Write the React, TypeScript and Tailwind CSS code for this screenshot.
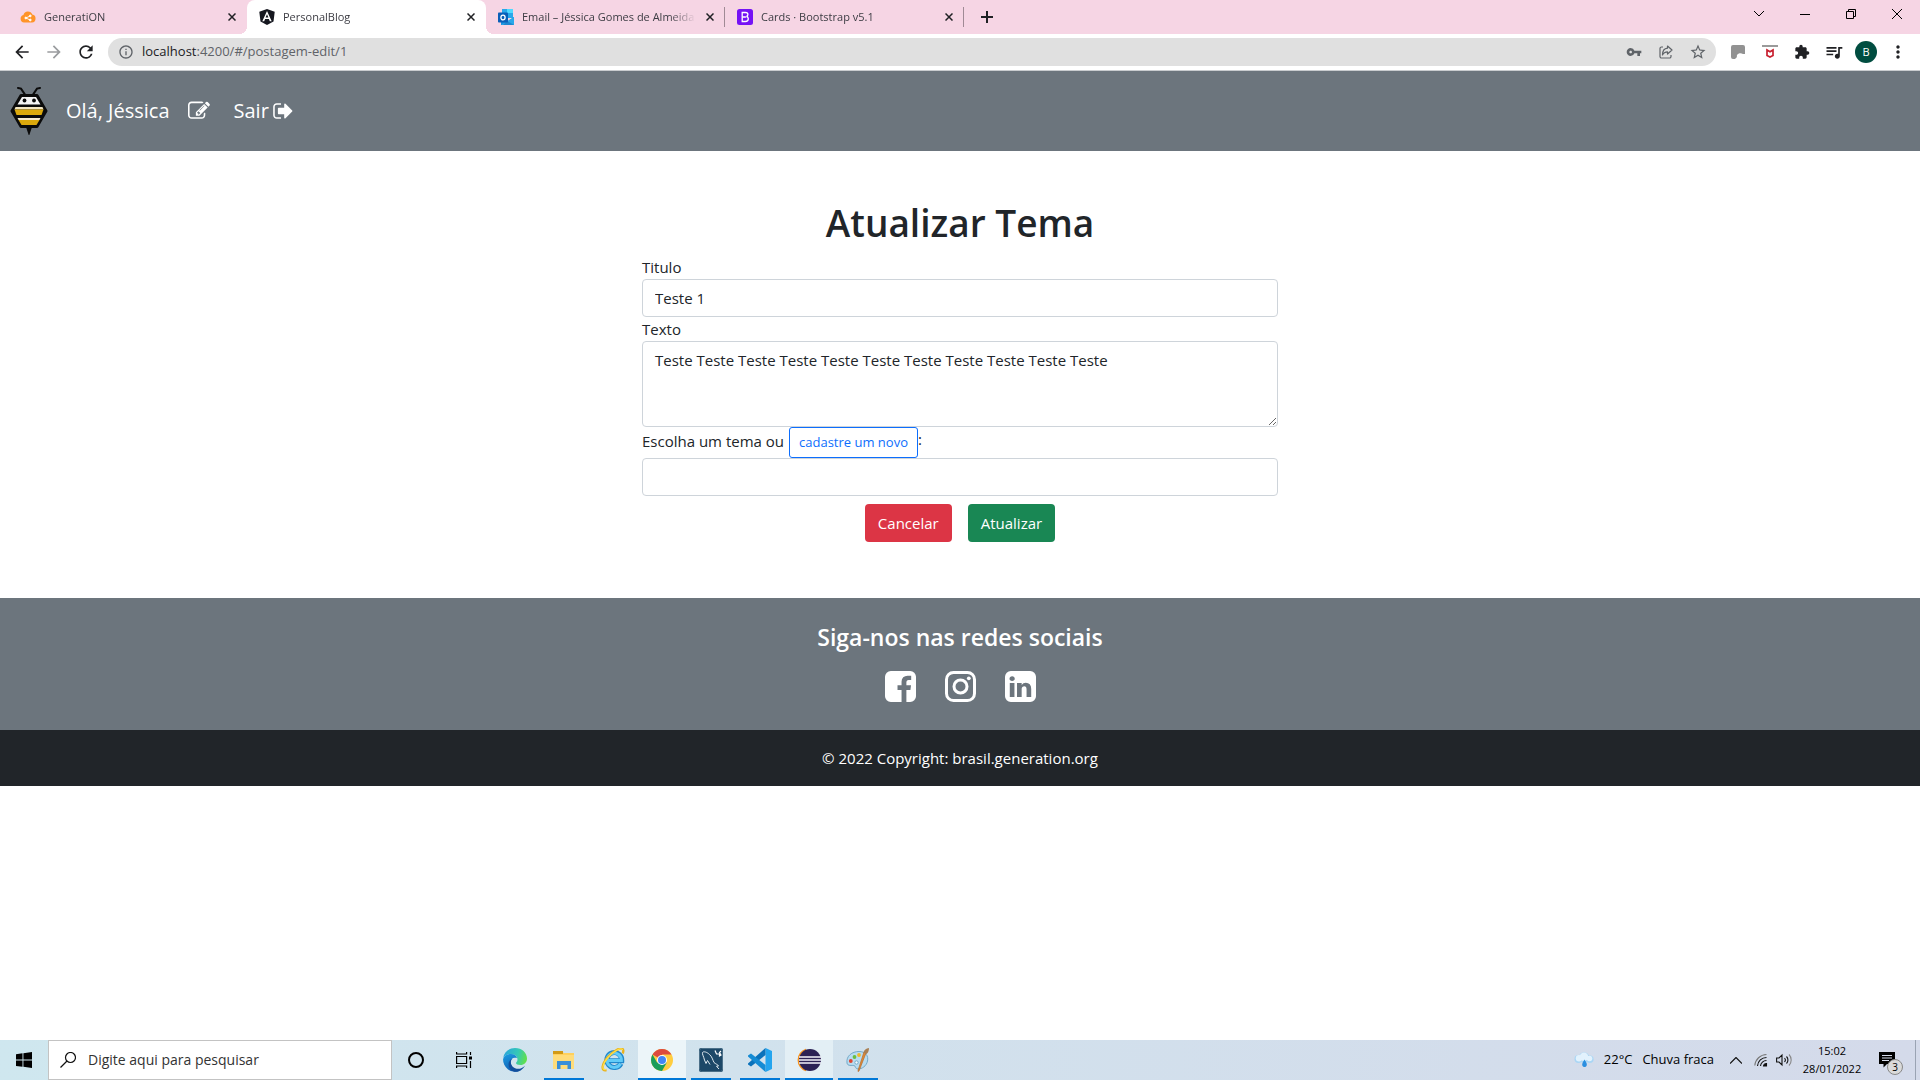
import React, { useState } from "react";
import { MdExtension, MdOutlineStarBorder, MdVpnKey, MdQueueMusic, MdArrowBack, MdArrowForward, MdRefresh, MdInfoOutline, MdMoreVert } from "react-icons/md";

type IconProps = { className?: string };

const CloudIcon = () => (
  <svg viewBox="0 0 16 16" className="size-4 shrink-0" aria-hidden="true">
    <path d="M4 13.500a3.900 3.900 0 0 1-.6-7.600A4.700 4.700 0 0 1 12.300 5.600 4 4 0 0 1 12 13.500z" fill="#ff9429" />
    <g stroke="#fff" strokeWidth="0.900" fill="#fff">
      <path d="M6 9l4-2M6 9l4 2" fill="none" />
      <circle cx="5.800" cy="9" r="0.900" />
      <circle cx="10.300" cy="6.900" r="0.900" />
      <circle cx="10.300" cy="11" r="0.900" />
    </g>
  </svg>
);

const AngularIcon = () => (
  <svg viewBox="0 0 16 16" className="size-4 shrink-0" aria-hidden="true">
    <path d="M8 0l7.700 2.700-1.200 9.800L8 16l-6.500-3.500L.3 2.700z" fill="#15171f" />
    <path d="M8 2L3.300 12.300h1.900l.9-2.300h3.800l.9 2.300h1.900zm0 3.200l1.400 3.300H6.600z" fill="#fff" />
  </svg>
);

const OutlookIcon = () => (
  <svg viewBox="0 0 16 16" className="size-4 shrink-0" aria-hidden="true">
    <path d="M4 0h11v9H4z" fill="#28a8ea" />
    <path d="M9 0h6v4H9z" fill="#50d9ff" />
    <path d="M4 4h5v5H4z" fill="#0364b8" />
    <path d="M3 8l7 4 6-4v8H3z" fill="#1490df" />
    <path d="M3 16l13-8v8z" fill="#28a8ea" />
    <path d="M9 12l7 4H5z" fill="#1066b5" opacity="0.500" />
    <rect y="3.500" width="10" height="10" rx="0.800" fill="#0a5fb8" />
    <ellipse cx="5" cy="8.500" rx="2.100" ry="2.400" fill="none" stroke="#fff" strokeWidth="1.300" />
  </svg>
);

const BootstrapIcon = () => (
  <svg viewBox="0 0 16 16" className="size-4 shrink-0" aria-hidden="true">
    <rect width="16" height="16" rx="2.500" fill="#7512f5" />
    <path d="M5.200 3.500h3.300c1.500 0 2.400.8 2.400 2.100 0 1-.6 1.700-1.500 1.900 1.200.2 1.900 1 1.900 2.200 0 1.700-1.100 2.800-2.900 2.800H5.200zM5.900 8h3" fill="none" stroke="#fff" strokeWidth="1.300" />
  </svg>
);

const CloseIcon = ({ className }: IconProps) => (
  <svg viewBox="0 0 8 8" className={className} aria-hidden="true">
    <path d="M.5.5l7 7M7.500.5l-7 7" stroke="currentColor" strokeWidth="1.500" />
  </svg>
);

const BeeLogo = () => (
  <svg viewBox="0 0 38 48" className="h-12 w-[38px]" aria-hidden="true">
    <path d="M8 1l3 .6 4 6M30 1l-3 .6-4 6" fill="none" stroke="#0b0b0b" strokeWidth="2" strokeLinecap="round" />
    <path d="M11 8.500h16L36 24l-9 15.500H11L2 24z" fill="#0b0b0b" stroke="#0b0b0b" strokeWidth="3" strokeLinejoin="round" />
    <path d="M19 49l-3-9h6z" fill="#0b0b0b" />
    <path d="M12 10h14l4.500 7.500H7.500z" fill="#f4f4f4" />
    <circle cx="14.500" cy="13.500" r="1.900" fill="#0b0b0b" />
    <circle cx="24" cy="13.500" r="1.900" fill="#0b0b0b" />
    <path d="M5.500 20h27l1 2.500h-29z" fill="#f3e7c4" />
    <path d="M4.500 22.500h29l-2 5.500H6.500z" fill="#dca90c" />
    <path d="M7.500 31h23l-1 2h-21z" fill="#f8ecd0" />
    <path d="M8.500 33h21l-3 5h-15z" fill="#dca90c" />
  </svg>
);

const EditIcon = () => (
  <svg viewBox="0 0 1792 1792" className="size-[22px]" fill="currentColor" aria-hidden="true">
    <path d="M888 1184l116-116-152-152-116 116v56h96v96h56zm440-720q-16-16-33 1l-350 350q-17 17-1 33t33-1l350-350q17-17 1-33zm80 594v190q0 119-84.500 203.500t-203.500 84.500h-832q-119 0-203.500-84.500t-84.500-203.500v-832q0-119 84.500-203.500t203.500-84.500h832q63 0 117 25 15 7 18 23 3 17-9 29l-49 49q-14 14-32 8-23-6-45-6h-832q-66 0-113 47t-47 113v832q0 66 47 113t113 47h832q66 0 113-47t47-113v-126q0-13 9-22l64-64q15-15 35-7t20 29zm-96-738l288 288-672 672h-288v-288zm444 132l-92 92-288-288 92-92q28-28 68-28t68 28l152 152q28 28 28 68t-28 68z" />
  </svg>
);

const SignOutIcon = () => (
  <svg viewBox="0 0 1600 1792" className="h-[22px] w-5" fill="currentColor" aria-hidden="true">
    <path d="M640 1440q0 4 1 20t.5 26.500-3 23.500-10 19.500-20.500 6.500h-320q-119 0-203.500-84.500t-84.500-203.500v-704q0-119 84.500-203.500t203.500-84.500h320q13 0 22.500 9.500t9.500 22.500q0 4 1 20t.5 26.500-3 23.500-10 19.500-20.500 6.500h-320q-66 0-113 47t-47 113v704q0 66 47 113t113 47h312l11.500 1 11.500 3 8 5.500 7 9 2 13.500zm928-544q0 26-19 45l-544 544q-19 19-45 19t-45-19-19-45v-288h-448q-26 0-45-19t-19-45v-384q0-26 19-45t45-19h448v-288q0-26 19-45t45-19 45 19l544 544q19 19 19 45z" />
  </svg>
);

const FacebookIcon = () => (
  <svg viewBox="0 128 1536 1536" className="size-[31px]" fill="currentColor" aria-hidden="true">
    <path d="M1248 128q119 0 203.500 84.500t84.500 203.500v960q0 119-84.500 203.500t-203.500 84.500h-188v-595h199l30-232h-229v-148q0-56 23.500-84t91.500-28l122-1v-207q-63-9-178-9-136 0-217.500 80t-81.500 226v171h-200v232h200v595h-532q-119 0-203.500-84.500t-84.500-203.500v-960q0-119 84.500-203.500t203.500-84.500h960z" />
  </svg>
);

const InstagramIcon = () => (
  <svg viewBox="0 0 31 31" className="size-[31px]" fill="none" stroke="currentColor" aria-hidden="true">
    <rect x="1.500" y="1.500" width="28" height="28" rx="7" strokeWidth="3" />
    <circle cx="15.500" cy="15.500" r="6.500" strokeWidth="3" />
    <circle cx="23.800" cy="7.300" r="1.900" fill="currentColor" stroke="none" />
  </svg>
);

const LinkedinIcon = () => (
  <svg viewBox="0 128 1536 1536" className="size-[31px]" fill="currentColor" aria-hidden="true">
    <path d="M237 1414h231v-694h-231v694zm246-908q-1-52-36-86t-93-34-94.500 34-36.500 86q0 51 35.500 85.500t92.500 34.500h1q59 0 95-34.500t36-85.500zm585 908h231v-398q0-154-73-233t-193-79q-136 0-209 117h2v-101h-231q3 66 0 694h231v-388q0-38 7-56 15-35 45-59.500t74-24.500q116 0 116 157v371zm468-998v960q0 119-84.500 203.500t-203.500 84.500h-960q-119 0-203.500-84.500t-84.500-203.500v-960q0-119 84.500-203.500t203.500-84.500h960q119 0 203.500 84.500t84.500 203.500z" />
  </svg>
);

const EdgeIcon = () => (
  <svg viewBox="0 0 24 24" className="size-6" aria-hidden="true">
    <defs>
      <linearGradient id="edgeTop" x1="0" y1="0.300" x2="1" y2="0.500">
        <stop offset="0" stopColor="#2aa5dc" />
        <stop offset="0.600" stopColor="#35c9b5" />
        <stop offset="1" stopColor="#62e04a" />
      </linearGradient>
      <linearGradient id="edgeBody" x1="0" y1="0" x2="0.400" y2="1">
        <stop offset="0" stopColor="#1b9de2" />
        <stop offset="1" stopColor="#1160b4" />
      </linearGradient>
    </defs>
    <path d="M.2 10C1 4 6 0 12 0c7 0 12 4.800 12 10.500 0 4-3 6.500-6.500 6.500-3 0-4.500-1-4.500-2 0-.7 1.500-1.300 1.500-3.500C14.500 8.500 12 6 8 6 4.500 6 1.500 7.500.2 10z" fill="url(#edgeTop)" />
    <path d="M.1 11C.8 8 4 6 8 6c3.500 0 5.500 2 6 4-5-1.500-7 2-6 6 1 4.500 5 7 8.500 6.800A12 12 0 0 1 .1 11z" fill="url(#edgeBody)" />
    <path d="M9.500 10.500c-2.500 2-2 6 0 8 3.500 3.500 9 3 12.500-.8-3.500 6-8.500 7-12 5.500-5-2-6.500-10-.5-12.700z" fill="#134f9c" />
  </svg>
);

const FolderIcon = () => (
  <svg viewBox="0 0 24 24" className="size-6" aria-hidden="true">
    <path d="M1 4h9l2 1h10v16H1z" fill="#ffd05c" />
    <path d="M1 3h10v3H1z" fill="#d29a16" />
    <path d="M1 7h21v14H1z" fill="#ffdc7a" />
    <path d="M5 21v-8h14v8h-3.500v-4h-7v4z" fill="#3a8fd8" />
  </svg>
);

const ExplorerIcon = () => (
  <svg viewBox="0 0 24 24" className="size-6" aria-hidden="true">
    <path d="M20 15.500a7.500 7.500 0 1 1 .8-2.800H7" fill="none" stroke="#2188cc" strokeWidth="5" />
    <path d="M19.600 15.500a7.200 7.200 0 1 1 .8-2.900H7" fill="none" stroke="#62cbf7" strokeWidth="3" />
    <path d="M5.500 22C-.5 23.500 1 16 6.500 9.500S20-1.500 22 1.500c.6 1 .3 2.500-.3 4" fill="none" stroke="#e9b21d" strokeWidth="2.400" />
    <path d="M5 21.500C0 22.500 1.500 16 7 9.500S20-1 21.700 2" fill="none" stroke="#fbe051" strokeWidth="1.200" />
  </svg>
);

const ChromeIcon = () => (
  <svg viewBox="0 0 22 22" className="size-[22px]" aria-hidden="true">
    <circle cx="11" cy="11" r="11" fill="#ffcd40" />
    <path d="M11 11L1.500 5.500A11 11 0 0 1 20.500 5.500H11z" fill="#dd4b3e" />
    <path d="M11 11l4.700 2.800L11 22A11 11 0 0 1 1.500 5.500l4.700 8.200z" fill="#1a9d5a" />
    <circle cx="11" cy="11" r="5" fill="#fff" />
    <circle cx="11" cy="11" r="4" fill="#4286f5" />
  </svg>
);

const WorkbenchIcon = () => (
  <svg viewBox="0 0 24 24" className="size-6" aria-hidden="true">
    <rect width="24" height="24" rx="2" fill="#1d4868" />
    <rect x="0.500" y="0.500" width="23" height="23" rx="2" fill="none" stroke="#4c7089" />
    <path d="M7 15.500L5.500 12C4.500 8 3 6 3.500 4.500 4.500 3 8 4 10.500 6.500c2.500 2 3 5 4.500 8 1.500 1.500 4 2 4.500 3.500l-2 .3 2.500 2.700M7 15.500l1.500-3 2.500 4" fill="none" stroke="#dfe9ef" />
    <path d="M16 2.500l1.500 3.500h3v2l1.500-1-1.500-2.500L22 3" stroke="#fff" strokeWidth="1.200" fill="none" />
  </svg>
);

const VsCodeIcon = () => (
  <svg viewBox="0 0 24 24" className="size-6" aria-hidden="true">
    <path d="M17.500 0L24 3v18l-6.500 3z" fill="#23a4ee" />
    <path d="M17.500 0v7L3 18.500 0 16.500v-1z" fill="#0a72bb" />
    <path d="M17.500 24v-7L3 5.500 0 7.500v1z" fill="#148bd4" />
  </svg>
);

const EclipseIcon = () => (
  <svg viewBox="0 0 24 24" className="size-6" aria-hidden="true">
    <path d="M9 1.500A11 11 0 0 0 9 22.500 12 12 0 0 1 9 1.500z" fill="#f7941e" stroke="#f7941e" strokeWidth="1.500" />
    <circle cx="13" cy="12" r="11" fill="#2c2255" />
    <path d="M2 9h22M2 12h22M2 15h22" stroke="#f4f4fa" strokeWidth="1.400" />
  </svg>
);

const PaintIcon = () => (
  <svg viewBox="0 0 24 24" className="size-6" aria-hidden="true">
    <path d="M1 15C0 8 6 3.500 13 3.500S22.500 8 21.500 13 16 21 12 21c-3 0-2-3-4-3.500S1.500 18.500 1 15z" fill="#b8dcf0" stroke="#74a9c8" />
    <circle cx="4.800" cy="13" r="1.900" fill="#e0452f" />
    <circle cx="8.500" cy="9" r="1.900" fill="#6abf40" />
    <circle cx="13" cy="7" r="1.900" fill="#f0b82c" />
    <circle cx="10.500" cy="14.500" r="1.700" fill="#f4fafd" stroke="#74a9c8" />
    <path d="M20 5l-7 18-1 .5.2-1.500L18 4z" fill="#e08a35" stroke="#b3682a" strokeWidth="0.700" />
    <path d="M17.500 4.500C18 2 20 .5 23 0c0 2-.5 4.500-2.500 6z" fill="#a97f53" />
  </svg>
);

const tabs = [
  { title: "GeneratiON", icon: <CloudIcon />, active: false, divider: false },
  { title: "PersonalBlog", icon: <AngularIcon />, active: true, divider: false },
  { title: "Email – Jéssica Gomes de Almeida", icon: <OutlookIcon />, active: false, divider: true },
  { title: "Cards · Bootstrap v5.1", icon: <BootstrapIcon />, active: false, divider: true },
];

const toolButton = "flex h-7 w-8 items-center justify-center";
const windowButton = "flex h-7 w-[46px] items-center justify-center text-black";

function TabStrip() {
  return (
    <div className="flex h-[34px] items-start bg-[#f6d5e4] pl-2 text-[11px] text-[#3c3c43]">
      <div role="tablist" className="flex h-full">
        {tabs.map((tab) => (
          <div
            key={tab.title}
            className={
              tab.active
                ? "relative flex h-full w-[239px] items-center rounded-t-lg bg-white before:absolute before:bottom-0 before:-left-2 before:size-2 before:bg-[radial-gradient(circle_at_0_0,#f6d5e4_8px,#fff_8px)] after:absolute after:-right-2 after:bottom-0 after:size-2 after:bg-[radial-gradient(circle_at_100%_0,#f6d5e4_8px,#fff_8px)]"
                : "flex h-full w-[239px] items-center"
            }
          >
            <button role="tab" aria-selected={tab.active} className="flex min-w-0 flex-1 items-center gap-2 pl-3">
              {tab.icon}
              <span className="flex-1 overflow-hidden text-left whitespace-nowrap [mask-image:linear-gradient(to_right,#000_85%,transparent)]">{tab.title}</span>
            </button>
            <button aria-label={"Fechar " + tab.title} className="flex w-7 items-center justify-center text-[#202124]">
              <CloseIcon className="size-2" />
            </button>
            <span className={tab.divider ? "h-5 w-px bg-[#a08a95]" : "h-5 w-px"} />
          </div>
        ))}
      </div>
      <button aria-label="Nova guia" className="ml-[9px] flex h-[34px] w-7 items-center justify-center">
        <svg viewBox="0 0 12 12" className="size-3">
          <path d="M6 0v12M0 6h12" stroke="#202124" strokeWidth="2" />
        </svg>
      </button>
      <div className="ml-auto flex">
        <button aria-label="Pesquisar guias" className={windowButton}>
          <svg viewBox="0 0 10 6" className="h-1.5 w-2.5"><path d="M0 0l5 5 5-5" fill="none" stroke="currentColor" /></svg>
        </button>
        <button aria-label="Minimizar" className={windowButton}>
          <span className="h-px w-2.5 bg-black" />
        </button>
        <button aria-label="Restaurar" className={windowButton}>
          <svg viewBox="0 0 10 10" className="size-2.5" fill="none" stroke="currentColor"><path d="M.5 2.500h7v7h-7zM2.500 2.500v-2h7v7h-2" /></svg>
        </button>
        <button aria-label="Fechar janela" className={windowButton}>
          <svg viewBox="0 0 10 10" className="size-2.5" stroke="currentColor"><path d="M0 0l10 10M10 0L0 10" /></svg>
        </button>
      </div>
    </div>
  );
}

function Toolbar() {
  return (
    <div className="flex h-[37px] items-center border-b border-[#c9cccf] bg-white px-1.5 text-[#202124]">
      <button aria-label="Voltar" className={toolButton}><MdArrowBack className="size-5" /></button>
      <button aria-label="Avançar" className="flex h-7 w-8 items-center justify-center text-[#9a9c9f]"><MdArrowForward className="size-5" /></button>
      <button aria-label="Recarregar" className={toolButton}><MdRefresh className="size-5" /></button>
      <div className="ml-1.5 flex h-7 flex-1 items-center rounded-full bg-[#e0e0e0] pr-0.5 pl-2.5 text-[#5f6368]">
        <MdInfoOutline className="size-4" />
        <a href="#/postagem-edit/1" className="ml-2 flex-1 text-[13px]"><span className="text-[#202124]">localhost</span>:4200/#/postagem-edit/1</a>
        <button aria-label="Senhas" className={toolButton}><MdVpnKey className="size-4" /></button>
        <button aria-label="Compartilhar" className={toolButton}>
          <svg viewBox="0 0 16 16" className="size-4" fill="none" stroke="currentColor" strokeWidth="1.200" strokeLinejoin="round">
            <path d="M5 3H3.500A1.500 1.500 0 0 0 2 4.500v8A1.500 1.500 0 0 0 3.500 14h8a1.500 1.500 0 0 0 1.500-1.500V11" />
            <path d="M9.500 2L14 6l-4.500 4V7.800C7 7.800 5.500 8.800 4.500 11c0-3.500 1.500-6.500 5-6.800z" />
          </svg>
        </button>
        <button aria-label="Favoritar" className={toolButton}><MdOutlineStarBorder className="size-[18px]" /></button>
      </div>
      <button aria-label="Extensão" className="ml-1.5 flex h-7 w-8 items-center justify-center">
        <svg viewBox="0 0 14 14" className="size-3.5"><path d="M2 0h10a2 2 0 0 1 2 2v7h-2C9 7 5 9 6 12l-2 2H2a2 2 0 0 1-2-2V2a2 2 0 0 1 2-2z" fill="#929292" /></svg>
      </button>
      <button aria-label="McAfee" className={toolButton}>
        <svg viewBox="0 0 16 14" className="h-3.5 w-4">
          <path d="M0 0h16v2H0z" fill="#9a9a9a" />
          <path d="M5 5v5.500L8 12l3-1.500V5L8 6.800z" fill="none" stroke="#c8202f" strokeWidth="1.700" />
        </svg>
      </button>
      <button aria-label="Extensões" className={toolButton}><MdExtension className="size-4" /></button>
      <button aria-label="Mídia" className={toolButton}><MdQueueMusic className="size-5" /></button>
      <button aria-label="Perfil" className={toolButton}>
        <span className="flex size-[22px] items-center justify-center rounded-full bg-[#004d40] text-[11px] text-white">B</span>
      </button>
      <button aria-label="Menu" className={toolButton}><MdMoreVert className="size-5" /></button>
    </div>
  );
}

function Navbar() {
  return (
    <nav className="flex h-20 items-center bg-[#6c757d] px-2.5 text-xl text-white">
      <a href="#/inicio" aria-label="Início"><BeeLogo /></a>
      <a href="#/perfil" className="ml-[18px] flex items-center gap-[18px]">Olá, Jéssica <EditIcon /></a>
      <a href="#/entrar" className="ml-6 flex items-center gap-1">Sair <SignOutIcon /></a>
    </nav>
  );
}

const field = "block w-full rounded border border-[#ced4da] bg-white px-3 py-1.5 text-[15px] leading-6 text-[#212529]";

function EditForm() {
  const [title, setTitle] = useState("Teste 1");
  const [text, setText] = useState("Teste Teste Teste Teste Teste Teste Teste Teste Teste Teste Teste");
  return (
    <div className="mx-auto w-full max-w-[1320px] pt-12 pb-14">
      <form className="mx-auto w-1/2 px-3 text-[15px] leading-6 text-[#212529]" onSubmit={(e) => e.preventDefault()}>
        <h1 className="mb-2 text-center text-[37px] leading-[48px] font-semibold">Atualizar Tema</h1>
        <label htmlFor="titulo" className="block">Titulo</label>
        <input id="titulo" value={title} onChange={(e) => setTitle(e.target.value)} className={field} />
        <label htmlFor="texto" className="block">Texto</label>
        <textarea id="texto" rows={3} value={text} onChange={(e) => setText(e.target.value)} className={field} />
        <div className="flex items-start">
          <label htmlFor="tema" className="pt-0.5">Escolha um tema ou</label>
          <button type="button" className="ml-[5px] rounded-[3px] border border-[#0d6efd] px-[9px] py-1 text-[13px] leading-[21px] text-[#0d6efd]">cadastre um novo</button>:
        </div>
        <select id="tema" defaultValue="" className="block h-[38px] w-full appearance-none rounded border border-[#ced4da] bg-white px-3">
          <option value=""></option>
        </select>
        <div className="mt-2 flex justify-center gap-4 text-white">
          <button type="button" className="rounded bg-[#dc3545] px-[13px] py-[7px]">Cancelar</button>
          <button type="submit" className="rounded bg-[#198754] px-[13px] py-[7px]">Atualizar</button>
        </div>
      </form>
    </div>
  );
}

function Footer() {
  return (
    <footer className="text-center text-white">
      <div className="bg-[#6c757d] pt-6 pb-7">
        <h4 className="text-[23px] leading-[30px] font-semibold">Siga-nos nas redes sociais</h4>
        <div className="mt-[19px] flex justify-center gap-[29px]">
          <a href="#facebook" aria-label="Facebook"><FacebookIcon /></a>
          <a href="#instagram" aria-label="Instagram"><InstagramIcon /></a>
          <a href="#linkedin" aria-label="LinkedIn"><LinkedinIcon /></a>
        </div>
      </div>
      <div className="bg-[#212529] p-4 text-[15px] leading-6">© 2022 Copyright: <a href="#brasil">brasil.generation.org</a></div>
    </footer>
  );
}

const apps = [
  { name: "Edge", icon: <EdgeIcon />, bar: "", tile: "" },
  { name: "Explorador de Arquivos", icon: <FolderIcon />, bar: "w-10", tile: "" },
  { name: "Internet Explorer", icon: <ExplorerIcon />, bar: "", tile: "" },
  { name: "Chrome", icon: <ChromeIcon />, bar: "w-12", tile: "bg-[#ecf5f9]" },
  { name: "MySQL Workbench", icon: <WorkbenchIcon />, bar: "w-10", tile: "" },
  { name: "Visual Studio Code", icon: <VsCodeIcon />, bar: "w-10", tile: "" },
  { name: "Eclipse", icon: <EclipseIcon />, bar: "w-12", tile: "bg-[#e3eff5]" },
  { name: "Paint", icon: <PaintIcon />, bar: "w-10", tile: "" },
];

function Taskbar() {
  return (
    <div className="flex h-10 items-center bg-linear-to-r from-[#cfe7ef] to-[#d4daea] text-black">
      <button aria-label="Iniciar" className="flex h-10 w-12 items-center justify-center">
        <svg viewBox="0 0 16 16" className="size-4"><path d="M0 2.200L6.500 1.300V7.600H0zM7.400 1.200L16 0v7.600H7.400zM0 8.500h6.500v6.300L0 13.900zM7.400 8.500H16V16l-8.600-1.200z" /></svg>
      </button>
      <label className="flex h-10 w-[344px] items-center border border-[#c3c3c3] bg-white pl-[11px]">
        <svg viewBox="0 0 16 16" className="size-4" fill="none" stroke="#111" strokeWidth="1.200"><circle cx="10.500" cy="5.500" r="5" /><path d="M7 9l-6.500 6.500" /></svg>
        <input aria-label="Pesquisar" placeholder="Digite aqui para pesquisar" className="ml-3 flex-1 text-sm outline-none placeholder:text-[#333]" />
      </label>
      <button aria-label="Cortana" className="flex h-10 w-12 items-center justify-center">
        <span className="size-4 rounded-full border-2 border-black" />
      </button>
      <button aria-label="Visão de tarefas" className="mr-[3px] flex h-10 w-12 items-center justify-center">
        <svg viewBox="0 0 16 16" className="size-4" fill="none" stroke="#000" strokeWidth="1.200">
          <path d="M.6 4.500h10v7h-10zM.6 0v2h10V0M.6 16v-2h10v2M14.500 0v3M14.500 9v7" /><path d="M13 4.500h3v3h-3z" fill="#000" stroke="none" />
        </svg>
      </button>
      <div className="flex gap-px">
        {apps.map((app) => (
          <button key={app.name} aria-label={app.name} className={"flex h-10 w-12 flex-col items-center " + app.tile}>
            <span className="flex h-[38px] items-center pt-0.5">{app.icon}</span>
            <span className={"h-0.5 bg-[#0078d7] " + app.bar} />
          </button>
        ))}
      </div>
      <div className="ml-auto flex h-10 items-center">
        <button className="flex items-center text-[13px]">
          <svg viewBox="0 0 20 16" className="h-4 w-5" aria-hidden="true">
            <g fill="#a9d6f5">
              <circle cx="4.500" cy="7" r="4" />
              <circle cx="10" cy="5.500" r="5.300" />
              <circle cx="15.800" cy="7.300" r="3.800" />
            </g>
            <g fill="#e2f2fd">
              <circle cx="5" cy="6.300" r="3.200" />
              <circle cx="10" cy="4.800" r="4.200" />
              <circle cx="15.500" cy="6.500" r="2.800" />
            </g>
            <path d="M10.500 7.500c4 5.500 2 7.500 0 7.500s-4-2 0-7.500z" fill="#2a8fe0" />
          </svg>
          <span className="ml-2.5">22°C</span>
          <span className="ml-2.5">Chuva fraca</span>
        </button>
        <button aria-label="Ícones ocultos" className="ml-4 flex w-3 justify-center">
          <svg viewBox="0 0 12 7" className="h-[7px] w-3" fill="none" stroke="#111" strokeWidth="1.200"><path d="M0 6.500l6-6 6 6" /></svg>
        </button>
        <button aria-label="Rede" className="ml-3 flex">
          <svg viewBox="0 0 14 14" className="size-3.5" fill="none" stroke="#111" strokeWidth="1.100">
            <path d="M.8 12.500A12 12 0 0 1 12.500 1.500" stroke="#777" /><path d="M3.500 13A9 9 0 0 1 12.500 4.500M6.500 13a6 6 0 0 1 6-5.500" /><path d="M9.500 13a3 3 0 0 1 3-2.500V13z" fill="#111" />
          </svg>
        </button>
        <button aria-label="Volume" className="ml-2 flex">
          <svg viewBox="0 0 16 14" className="h-3.5 w-4" fill="none" stroke="#111" strokeWidth="1.100">
            <path d="M.6 5v4h2.400L6 12V2L3 5zM8.500 5a3 3 0 0 1 0 4M10.500 3.500a5 5 0 0 1 0 7" /><path d="M13 1.500a8 8 0 0 1 0 11" stroke="#888" />
          </svg>
        </button>
        <button className="ml-2.5 w-[60px] text-center text-[11px] leading-[18px] whitespace-nowrap"><span className="block">15:02</span><span className="block">28/01/2022</span></button>
        <button aria-label="Notificações" className="relative ml-[17px] flex">
          <svg viewBox="0 0 16 16" className="size-4"><path d="M0 0h16v12H8l-3.500 3.500V12H0z" /><path d="M3 3.500h10M3 6h10M3 8.500h7" stroke="#d4daea" /></svg>
          <span className="absolute top-[7px] left-2 flex size-4 items-center justify-center rounded-full border border-[#888] bg-[#dadada] text-[10px]">3</span>
        </button>
        <span className="ml-5 h-10 w-px bg-[#9aa3b3]" />
        <button aria-label="Mostrar área de trabalho" className="h-10 w-1" />
      </div>
    </div>
  );
}

export default function App() {
  return (
    <div className="flex min-h-screen flex-col bg-white font-['Open_Sans','Noto_Sans',sans-serif]">
      <header>
        <TabStrip />
        <Toolbar />
      </header>
      <main className="flex-1">
        <Navbar />
        <EditForm />
        <Footer />
      </main>
      <Taskbar />
    </div>
  );
}
